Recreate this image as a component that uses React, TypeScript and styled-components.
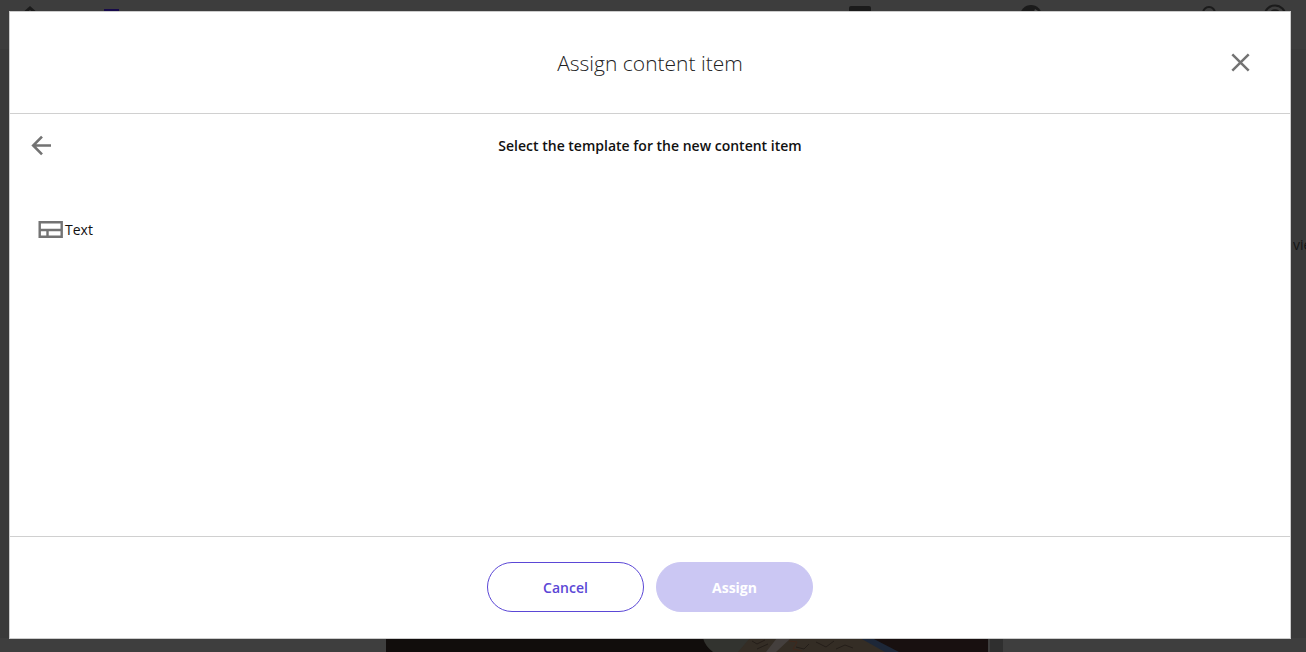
import React from "react";
import styled, { createGlobalStyle } from "styled-components";

const GlobalStyle = createGlobalStyle`
  *, *::before, *::after { box-sizing: border-box; }
  html, body { margin: 0; height: 100%; overflow: hidden; background: #3b3b3b; }
  body, button { font-family: "Segoe UI", "Open Sans", "Noto Sans", sans-serif; }
  #root { height: 100%; }
`;

const Page = styled.div`
  display: flex;
  flex-direction: column;
  height: 100vh;
  overflow: hidden;
  background: #3a3a3a;
`;

const Toolbar = styled.div`
  display: flex;
  justify-content: space-between;
  flex: none;
  height: 49px;
  padding: 4px 19px 0 18px;
  background: #3d3d3d;
  color: #1b1b1b;
`;

const ToolGroup = styled.div<{ $gap: number }>`
  display: flex;
  gap: ${(p) => p.$gap}px;
`;

const ToolIcon = styled.svg<{ $after?: number }>`
  display: block;
  flex: none;
  width: 24px;
  height: 24px;
  margin-right: ${(p) => p.$after ?? 0}px;
`;

const PageBody = styled.div`
  display: flex;
  flex: 1;
  justify-content: flex-end;
  padding-top: 186px;
`;

const SideText = styled.div`
  width: 13px;
  overflow: hidden;
  white-space: nowrap;
  font-size: 14px;
  line-height: 20px;
  color: #141414;
`;

const HeroRow = styled.div`
  display: flex;
  flex: none;
  height: 14px;
`;

const HeroSide = styled.div<{ $grow: number }>`
  flex: ${(p) => p.$grow} 1 0;
  background: #3e3e3e;
`;

const HeroPicture = styled.svg`
  display: block;
  flex: none;
  width: 602px;
  height: 14px;
`;

const ScrollStrip = styled.div`
  flex: none;
  width: 15px;
  border-left: 2px solid #3e3e3e;
  background: #2f2f2f;
`;

const Overlay = styled.div`
  position: fixed;
  inset: 0;
  display: flex;
  padding: 11px 15px 13px 9px;
`;

const Dialog = styled.section`
  display: flex;
  flex: 1;
  flex-direction: column;
  border: 1px solid #cccccc;
  background: #ffffff;
`;

const DialogHeader = styled.header`
  display: grid;
  grid-template-columns: 60px 1fr 60px;
  align-items: center;
  flex: none;
  height: 102px;
  padding: 0 20px;
  border-bottom: 1px solid #d0d0d0;
`;

const Title = styled.h1`
  grid-column: 2;
  margin: 0;
  font-size: 21px;
  font-weight: 300;
  line-height: 30px;
  text-align: center;
  color: #222222;
`;

const IconButton = styled.button`
  display: flex;
  align-items: center;
  justify-content: center;
  width: 24px;
  height: 24px;
  padding: 0;
  border: 0;
  background: none;
  color: #737373;
  cursor: pointer;
`;

const CloseButton = styled(IconButton)`
  justify-self: end;
  margin-right: 18px;
`;

const DialogBody = styled.div`
  flex: 1;
  min-height: 0;
`;

const StepBar = styled.div`
  display: grid;
  grid-template-columns: 40px 1fr 40px;
  align-items: center;
  height: 64px;
  padding: 0 20px;
`;

const StepTitle = styled.h2`
  margin: 0;
  font-size: 14px;
  font-weight: 600;
  line-height: 20px;
  text-align: center;
  color: #111111;
`;

const TemplateList = styled.ul`
  margin: 0;
  padding: 40px 28px 0;
  list-style: none;
`;

const TemplateButton = styled.button`
  display: flex;
  align-items: center;
  gap: 2px;
  padding: 0;
  border: 0;
  background: none;
  font-size: 14px;
  line-height: 24px;
  color: #111111;
  cursor: pointer;
`;

const DialogFooter = styled.footer`
  display: flex;
  align-items: center;
  justify-content: center;
  gap: 12px;
  flex: none;
  height: 102px;
  padding-bottom: 1px;
  border-top: 1px solid #d0d0d0;
`;

const ActionButton = styled.button<{ $primary?: boolean }>`
  width: 157px;
  height: 50px;
  padding: 2px 0 0;
  border: 1px solid ${(p) => (p.$primary ? "#cbc7f3" : "#5b47d6")};
  border-radius: 25px;
  background: ${(p) => (p.$primary ? "#cbc7f3" : "#ffffff")};
  font-size: 14px;
  font-weight: ${(p) => (p.$primary ? 700 : 600)};
  line-height: 20px;
  color: ${(p) => (p.$primary ? "#ffffff" : "#5b47d6")};
`;

export default function App() {
  return (
    <>
      <GlobalStyle />
      <Page aria-hidden="true">
        <Toolbar>
          <ToolGroup $gap={57}>
            <ToolIcon viewBox="0 0 24 24" fill="none" stroke="currentColor" strokeWidth="3">
              <path d="M3 12 12 4l9 8M6 10v11h12V10" />
            </ToolIcon>
            <ToolIcon viewBox="0 0 24 24">
              <path d="M5 5h15v15H5z" fill="#170a4a" />
            </ToolIcon>
          </ToolGroup>
          <ToolGroup $gap={0}>
            <ToolIcon viewBox="0 0 24 24" $after={147}>
              <rect x="1" y="2" width="22" height="16" rx="2" fill="currentColor" />
            </ToolIcon>
            <ToolIcon viewBox="0 0 24 24" $after={154}>
              <circle cx="12" cy="12" r="11" fill="currentColor" />
              <path d="m16 5 3 2-2 4-3-1z" fill="#4a4a4a" />
            </ToolIcon>
            <ToolIcon viewBox="0 0 24 24" $after={42} fill="none" stroke="currentColor" strokeWidth="2">
              <circle cx="12" cy="9" r="6" />
              <path d="M3 23c1-9 17-9 18 0" />
            </ToolIcon>
            <ToolIcon viewBox="0 0 24 24" fill="none" stroke="currentColor" strokeWidth="2">
              <circle cx="12" cy="12" r="10.5" />
              <path d="M8 10c0-5 8-5 8 0 0 3-4 3-4 6" />
            </ToolIcon>
          </ToolGroup>
        </Toolbar>
        <PageBody>
          <SideText>view</SideText>
        </PageBody>
        <HeroRow>
          <HeroSide $grow={386} />
          <HeroPicture viewBox="0 0 602 14">
            <path d="M0 0h602v14H0z" fill="#110d0c" />
            <path d="M470 0h132v14H440z" fill="#181010" />
            <path d="M317 0h72l-8 14h-54q-8-6-10-14z" fill="#32332f" />
            <path d="M364 0h116l28 14H352z" fill="#342d25" />
            <path d="M391 0h14l-15 14h-10z" fill="#443f3d" />
            <path d="M366 3l5 3 8-4M371 11l11-5M410 9l8 2 5-5M430 4l10 5 8-6M450 11l9-4 8 3" fill="none" stroke="#241e19" strokeWidth="1" />
            <path d="M403 3l8 1-4 7 9 2" fill="none" stroke="#40281c" strokeWidth="1" />
            <path d="M474 0h12l27 14h-14z" fill="#1d2738" />
          </HeroPicture>
          <ScrollStrip />
          <HeroSide $grow={303} />
        </HeroRow>
      </Page>
      <Overlay>
        <Dialog role="dialog" aria-modal="true" aria-labelledby="dialog-title">
          <DialogHeader>
            <Title id="dialog-title">Assign content item</Title>
            <CloseButton type="button" aria-label="Close">
              <svg width="24" height="24" viewBox="0 0 24 24" fill="none" stroke="currentColor" strokeWidth="2.5">
                <path d="M4.3 3.3 20.7 19.7M20.7 3.3 4.3 19.7" />
              </svg>
            </CloseButton>
          </DialogHeader>
          <DialogBody>
            <StepBar>
              <IconButton type="button" aria-label="Back">
                <svg width="24" height="24" viewBox="0 0 24 24" fill="none" stroke="currentColor" strokeWidth="2.6">
                  <path d="M21 11.5H3.2M12 2.7 3.2 11.5l8.8 8.8" />
                </svg>
              </IconButton>
              <StepTitle>Select the template for the new content item</StepTitle>
            </StepBar>
            <TemplateList>
              <li>
                <TemplateButton type="button">
                  <svg width="25" height="24" viewBox="0 0 25 24" fill="none" stroke="#737373" strokeWidth="2.4">
                    <path d="M1.7 4.2h22v14.6h-22zM1.7 12h22M9.5 12v7" />
                  </svg>
                  Text
                </TemplateButton>
              </li>
            </TemplateList>
          </DialogBody>
          <DialogFooter>
            <ActionButton type="button">Cancel</ActionButton>
            <ActionButton type="button" $primary disabled>
              Assign
            </ActionButton>
          </DialogFooter>
        </Dialog>
      </Overlay>
    </>
  );
}
